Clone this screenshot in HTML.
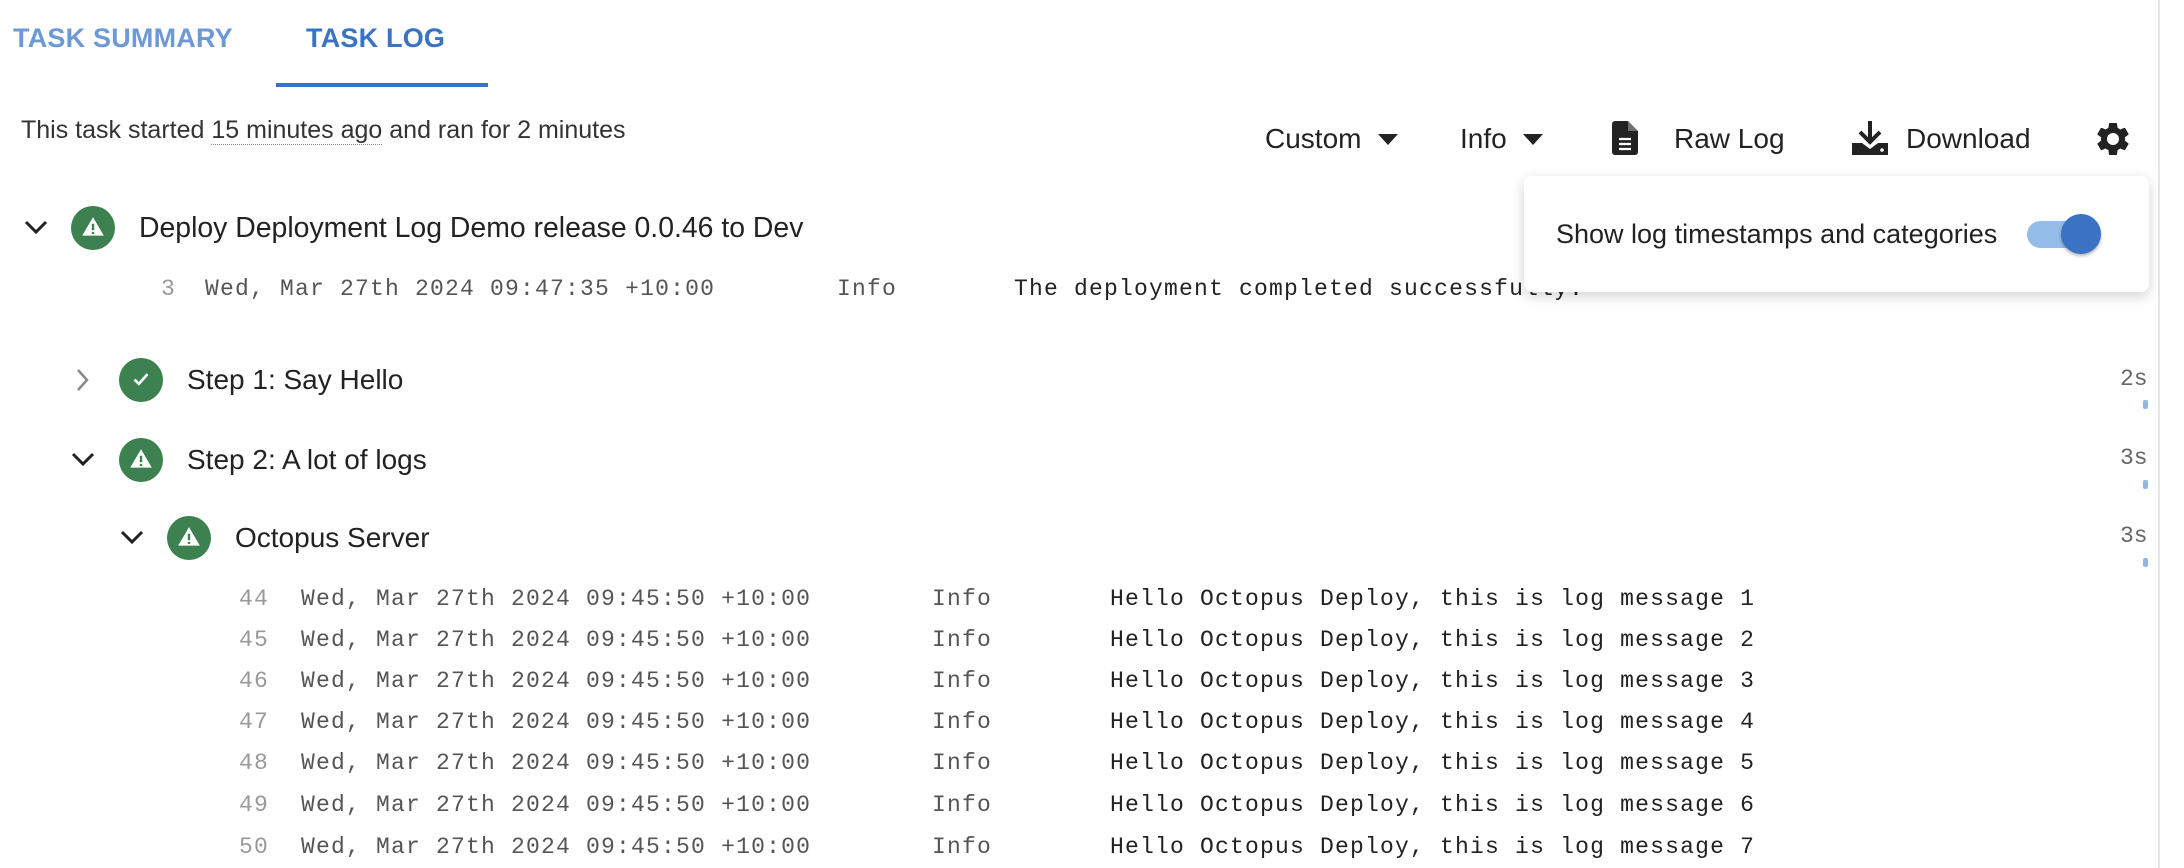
<!DOCTYPE html>
<html><head><meta charset="utf-8"><style>
*{margin:0;padding:0;box-sizing:border-box}
body{width:2184px;height:868px;overflow:hidden;background:#fff;font-family:"Liberation Sans",sans-serif;color:#222;position:relative}
.a{position:absolute;white-space:pre}
.tab{font-size:27px;font-weight:bold;top:23px;letter-spacing:0.2px}
.m{font-family:"Liberation Mono",monospace;font-size:23px;letter-spacing:1.2px;position:absolute;white-space:pre;line-height:30px}
.n{color:#999;text-align:right;width:60px}
.ts{color:#555}
.ic{position:absolute;width:44px;height:44px;border-radius:50%;background:#3d8150}
.ic svg{position:absolute;left:9px;top:8px}
.t{font-size:28px;position:absolute;white-space:pre;line-height:30px}
.d{font-family:"Liberation Mono",monospace;font-size:23px;color:#666;position:absolute;left:2120px}
.bar{position:absolute;left:2143px;width:5px;height:9px;background:#8fb8e6;border-radius:2px}
</style></head><body>
<div class="a tab" style="left:13px;color:#6d9ad6">TASK SUMMARY</div>
<div class="a tab" style="left:306px;color:#3a72c4">TASK LOG</div>
<div class="a" style="left:276px;top:83px;width:212px;height:4px;background:#3a72c4"></div>
<div class="a" style="left:21px;top:116px;font-size:25px;color:#333">This task started <span style="border-bottom:1.5px dotted #888">15 minutes ago</span> and ran for 2 minutes</div>

<div class="t" style="left:1265px;top:124px">Custom</div>
<svg class="a" style="left:1378px;top:134px" width="20" height="12"><path d="M0 0h20L10 11z" fill="#222"/></svg>
<div class="t" style="left:1460px;top:124px">Info</div>
<svg class="a" style="left:1523px;top:134px" width="20" height="12"><path d="M0 0h20L10 11z" fill="#222"/></svg>
<svg class="a" style="left:1612px;top:121px" width="26" height="34" viewBox="0 0 26 34"><path d="M3 0h13l10 10v21a3 3 0 0 1-3 3H3a3 3 0 0 1-3-3V3a3 3 0 0 1 3-3z" fill="#222"/><path d="M16 0v10h10" fill="#fff" opacity=".35"/><path d="M7 18h12M7 23h12M7 28h12" stroke="#fff" stroke-width="2.2"/></svg>
<div class="t" style="left:1674px;top:124px">Raw Log</div>
<svg class="a" style="left:1852px;top:121px" width="36" height="34" viewBox="0 0 36 34"><path d="M18 0v18" stroke="#222" stroke-width="4"/><path d="M8 11l10 10 10-10" stroke="#222" stroke-width="4" fill="none"/><path d="M0 22h10l8 6 8-6h10v12H0z" fill="#222"/><circle cx="30" cy="29" r="1.8" fill="#fff"/></svg>
<div class="t" style="left:1906px;top:124px">Download</div>
<svg class="a" style="left:2093px;top:119px" width="40" height="40" viewBox="0 0 24 24"><path fill="#222" d="M19.14 12.94c.04-.3.06-.61.06-.94 0-.32-.02-.64-.07-.94l2.03-1.58a.49.49 0 0 0 .12-.61l-1.920-3.32a.49.49 0 0 0-.59-.22l-2.39.96c-.5-.38-1.030-.7-1.620-.94l-.36-2.54a.48.48 0 0 0-.48-.41h-3.84c-.24 0-.43.17-.47.41l-.36 2.54c-.59.24-1.130.57-1.620.94l-2.39-.96a.48.48 0 0 0-.59.22L2.74 8.87c-.12.21-.08.47.12.61l2.03 1.58c-.05.3-.09.63-.09.94s.02.64.07.94l-2.03 1.58a.49.49 0 0 0-.12.61l1.92 3.32c.12.22.37.29.59.22l2.39-.96c.5.38 1.03.7 1.62.94l.36 2.54c.05.24.24.41.48.41h3.84c.24 0 .44-.17.47-.41l.36-2.54c.59-.24 1.13-.56 1.62-.94l2.39.96c.22.08.47 0 .59-.22l1.92-3.32c.12-.22.07-.47-.12-.61l-2.01-1.58zM12 15.6A3.6 3.6 0 1 1 12 8.4a3.6 3.6 0 0 1 0 7.2z"/></svg>

<div class="a" style="left:2158px;top:0;width:2px;height:868px;background:#e6e6e6"></div>

<!-- row 1 -->
<svg class="a" style="left:24px;top:220px" width="24" height="16"><path d="M2 2l10 10 10-10" stroke="#222" stroke-width="3" fill="none"/></svg>
<div class="ic" style="left:71px;top:206px"><svg width="26" height="26" viewBox="0 0 24 24"><path d="M12 3L22 20H2z" fill="#fff"/><path d="M12 9v6M12 16.5v2" stroke="#3d8150" stroke-width="2.2"/></svg></div>
<div class="t" style="left:139px;top:213px;font-size:28.4px">Deploy Deployment Log Demo release 0.0.46 to Dev</div>
<div class="m n" style="left:116px;top:274px">3</div>
<div class="m ts" style="left:205px;top:274px">Wed, Mar 27th 2024 09:47:35 +10:00</div>
<div class="m ts" style="left:837px;top:274px">Info</div>
<div class="m" style="left:1014px;top:274px;color:#222">The deployment completed successfully.</div>

<!-- popup -->
<div class="a" style="left:1524px;top:176px;width:625px;height:116px;background:#fff;border-radius:8px;box-shadow:0 4px 14px rgba(0,0,0,.18)"></div>
<div class="a" style="left:1556px;top:219px;font-size:27px;color:#222">Show log timestamps and categories</div>
<div class="a" style="left:2027px;top:221px;width:68px;height:27px;border-radius:14px;background:#93bde8"></div>
<div class="a" style="left:2061px;top:214px;width:40px;height:40px;border-radius:50%;background:#3a72c4;box-shadow:0 2px 3px rgba(0,0,0,.3)"></div>

<!-- step 1 -->
<svg class="a" style="left:76px;top:368px" width="14" height="24"><path d="M2 2l9 10-9 10" stroke="#888" stroke-width="2.5" fill="none"/></svg>
<div class="ic" style="left:119px;top:358px"><svg width="26" height="26" viewBox="0 0 24 24"><path d="M6 12.5l4 4 8-9" stroke="#fff" stroke-width="2.4" fill="none"/></svg></div>
<div class="t" style="left:187px;top:365px">Step 1: Say Hello</div>
<div class="d" style="top:366px">2s</div><div class="bar" style="top:400px"></div>

<!-- step 2 -->
<svg class="a" style="left:71px;top:452px" width="24" height="16"><path d="M2 2l10 10 10-10" stroke="#222" stroke-width="3" fill="none"/></svg>
<div class="ic" style="left:119px;top:438px"><svg width="26" height="26" viewBox="0 0 24 24"><path d="M12 3L22 20H2z" fill="#fff"/><path d="M12 9v6M12 16.5v2" stroke="#3d8150" stroke-width="2.2"/></svg></div>
<div class="t" style="left:187px;top:445px">Step 2: A lot of logs</div>
<div class="d" style="top:445px">3s</div><div class="bar" style="top:480px"></div>

<!-- octopus -->
<svg class="a" style="left:120px;top:530px" width="24" height="16"><path d="M2 2l10 10 10-10" stroke="#222" stroke-width="3" fill="none"/></svg>
<div class="ic" style="left:167px;top:516px"><svg width="26" height="26" viewBox="0 0 24 24"><path d="M12 3L22 20H2z" fill="#fff"/><path d="M12 9v6M12 16.5v2" stroke="#3d8150" stroke-width="2.2"/></svg></div>
<div class="t" style="left:235px;top:523px">Octopus Server</div>
<div class="d" style="top:523px">3s</div><div class="bar" style="top:558px"></div>

<div class="m n" style="left:209px;top:584px">44</div><div class="m ts" style="left:301px;top:584px">Wed, Mar 27th 2024 09:45:50 +10:00</div><div class="m ts" style="left:932px;top:584px">Info</div><div class="m" style="left:1110px;top:584px">Hello Octopus Deploy, this is log message 1</div>
<div class="m n" style="left:209px;top:625px">45</div><div class="m ts" style="left:301px;top:625px">Wed, Mar 27th 2024 09:45:50 +10:00</div><div class="m ts" style="left:932px;top:625px">Info</div><div class="m" style="left:1110px;top:625px">Hello Octopus Deploy, this is log message 2</div>
<div class="m n" style="left:209px;top:666px">46</div><div class="m ts" style="left:301px;top:666px">Wed, Mar 27th 2024 09:45:50 +10:00</div><div class="m ts" style="left:932px;top:666px">Info</div><div class="m" style="left:1110px;top:666px">Hello Octopus Deploy, this is log message 3</div>
<div class="m n" style="left:209px;top:707px">47</div><div class="m ts" style="left:301px;top:707px">Wed, Mar 27th 2024 09:45:50 +10:00</div><div class="m ts" style="left:932px;top:707px">Info</div><div class="m" style="left:1110px;top:707px">Hello Octopus Deploy, this is log message 4</div>
<div class="m n" style="left:209px;top:748px">48</div><div class="m ts" style="left:301px;top:748px">Wed, Mar 27th 2024 09:45:50 +10:00</div><div class="m ts" style="left:932px;top:748px">Info</div><div class="m" style="left:1110px;top:748px">Hello Octopus Deploy, this is log message 5</div>
<div class="m n" style="left:209px;top:790px">49</div><div class="m ts" style="left:301px;top:790px">Wed, Mar 27th 2024 09:45:50 +10:00</div><div class="m ts" style="left:932px;top:790px">Info</div><div class="m" style="left:1110px;top:790px">Hello Octopus Deploy, this is log message 6</div>
<div class="m n" style="left:209px;top:832px">50</div><div class="m ts" style="left:301px;top:832px">Wed, Mar 27th 2024 09:45:50 +10:00</div><div class="m ts" style="left:932px;top:832px">Info</div><div class="m" style="left:1110px;top:832px">Hello Octopus Deploy, this is log message 7</div>
</body></html>
